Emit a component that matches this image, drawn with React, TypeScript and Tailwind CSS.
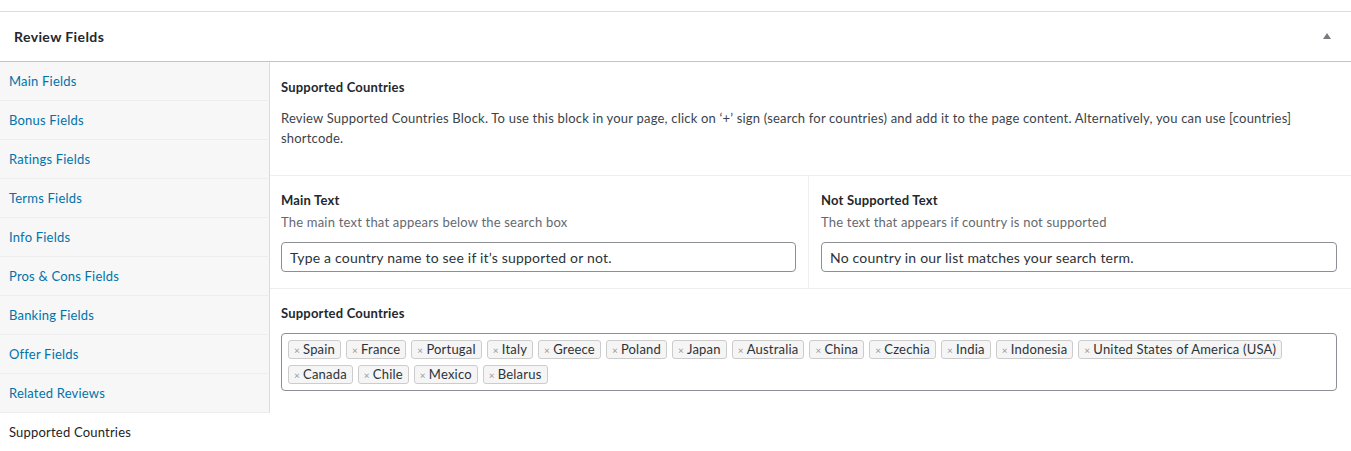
const tabs = [
	'Main Fields',
	'Bonus Fields',
	'Ratings Fields',
	'Terms Fields',
	'Info Fields',
	'Pros & Cons Fields',
	'Banking Fields',
	'Offer Fields',
	'Related Reviews'
]

const countries = [
	'Spain',
	'France',
	'Portugal',
	'Italy',
	'Greece',
	'Poland',
	'Japan',
	'Australia',
	'China',
	'Czechia',
	'India',
	'Indonesia',
	'United States of America (USA)',
	'Canada',
	'Chile',
	'Mexico',
	'Belarus'
]

export default function App() {
	return (
		<div className="h-[451px] w-full overflow-hidden bg-white pt-[11px] font-['Lato',sans-serif] text-[13px] tracking-[0.2px] text-[#3c434a]">
			<div className="border-t border-[#dcdcde]">
				<div className="flex h-[50px] items-center justify-between border-b border-[#c3c4c7] px-[14px]">
					<h2 className="text-[14px] font-bold tracking-[0.4px] text-[#23282d]">Review Fields</h2>
					<svg width="8" height="6" viewBox="0 0 8 6" className="mr-[6px] mb-[2px]">
						<path d="M4 0 L8 6 L0 6 Z" fill="#787c82" />
					</svg>
				</div>

				<div className="flex">
					<ul className="w-[270px] shrink-0">
						{tabs.map((tab) => (
							<li
								key={tab}
								className="flex h-[39px] items-center border-r border-b border-[#dcdcde] border-b-[#eeeeee] bg-[#f7f7f7] px-[9px] pt-[1px] text-[#0073aa]"
							>
								{tab}
							</li>
						))}
						<li className="flex h-[39px] items-center px-[9px] pt-[1px] text-[#1d2327]">
							Supported Countries
						</li>
					</ul>

					<div className="flex-1">
						<div className="border-b border-[#eeeeee] px-[11px] pt-[15px] pb-[27px]">
							<h3 className="leading-5 font-bold text-[#23282d]">Supported Countries</h3>
							<p className="mt-[11px] leading-5">
								Review Supported Countries Block. To use this block in your page, click on ‘+’ sign
								(search for countries) and add it to the page content. Alternatively, you can use
								[countries] shortcode.
							</p>
						</div>

						<div className="grid grid-cols-[539px_1fr] border-b border-[#eeeeee]">
							<div className="border-r border-[#eeeeee] pt-[14px] pr-3 pb-[16px] pl-[11px]">
								<label className="block leading-5 font-bold text-[#23282d]">Main Text</label>
								<p className="mt-[2px] leading-5 text-[#646970]">
									The main text that appears below the search box
								</p>
								<div className="mt-[10px] flex h-[30px] items-center rounded-[4px] border border-[#8c8f94] px-2 text-[14px] text-[#2c3338]">
									Type a country name to see if it’s supported or not.
								</div>
							</div>
							<div className="pt-[14px] pr-[14px] pb-[16px] pl-3">
								<label className="block leading-5 font-bold text-[#23282d]">Not Supported Text</label>
								<p className="mt-[2px] leading-5 text-[#646970]">
									The text that appears if country is not supported
								</p>
								<div className="mt-[10px] flex h-[30px] items-center rounded-[4px] border border-[#8c8f94] px-2 text-[14px] text-[#2c3338]">
									No country in our list matches your search term.
								</div>
							</div>
						</div>

						<div className="pt-[14px] pr-[14px] pl-[11px]">
							<label className="block leading-5 font-bold text-[#23282d]">Supported Countries</label>
							<div className="mt-[10px] flex min-h-[56px] flex-wrap content-start gap-x-[5px] gap-y-[6px] rounded-[4px] border border-[#8c8f94] px-[6px] py-[6px]">
								{countries.map((c) => (
									<span
										key={c}
										className="flex h-[19px] items-center rounded-[3px] border border-[#cccccc] bg-[#f5f5f5] pr-[5px] pl-[5px] text-[13px] leading-none tracking-[0.2px] text-[#2c3338]"
									>
										<span className="mr-[3px] text-[10px] text-[#999999]">×</span>
										{c}
									</span>
								))}
							</div>
						</div>
					</div>
				</div>
			</div>
		</div>
	)
}
